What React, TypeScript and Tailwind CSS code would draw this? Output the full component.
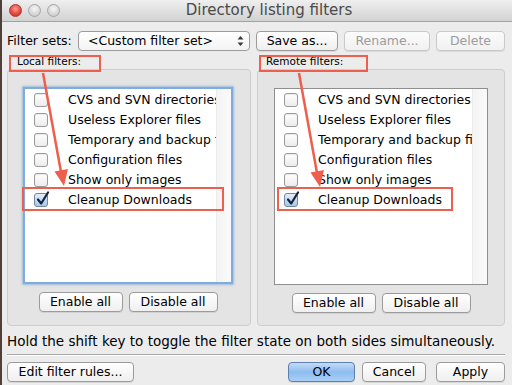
import React from 'react';

const FONT = "font-['DejaVu_Sans',sans-serif]";

const items = [
  { label: 'CVS and SVN directories', on: false },
  { label: 'Useless Explorer files', on: false },
  { label: 'Temporary and backup files', on: false },
  { label: 'Configuration files', on: false },
  { label: 'Show only images', on: false },
  { label: 'Cleanup Downloads', on: true },
];

function Check({ on }: { on: boolean }) {
  if (on) {
    return (
      <span className="relative block w-[14px] h-[14px] rounded-[3px] border border-[#6c86a6] bg-gradient-to-b from-[#e4eef9] to-[#a9c7e8] shrink-0">
        <svg className="absolute left-[1px] top-[-3px]" width="14" height="15" viewBox="0 0 14 15">
          <path d="M2 8.5 L5.2 12.5 L12 1.5" fill="none" stroke="#15233f" strokeWidth="2.2" strokeLinecap="round" strokeLinejoin="round" />
        </svg>
      </span>
    );
  }
  return (
    <span className="block w-[14px] h-[14px] rounded-[3px] border border-[#9a9a9a] bg-gradient-to-b from-white to-[#ececec] shadow-[inset_0_1px_1px_rgba(0,0,0,0.08)] shrink-0" />
  );
}

function MacButton({ children, w, disabled, primary }: { children: React.ReactNode; w: string; disabled?: boolean; primary?: boolean }) {
  let cls = 'border-[#9b9b9b] bg-gradient-to-b from-white to-[#efefef] text-black';
  if (disabled) cls = 'border-[#c9c9c9] bg-gradient-to-b from-[#fbfbfb] to-[#f1f1f1] text-[#9c9c9c]';
  if (primary) cls = 'border-[#5c7fae] bg-gradient-to-b from-[#c3dcf7] via-[#8dbcee] to-[#a9cff5] text-black';
  return (
    <div className={`${w} h-[20px] shrink-0 rounded-[4px] border ${cls} shadow-[0_1px_0_rgba(0,0,0,0.08)] flex items-center justify-center text-[12.5px] leading-none`}>
      {children}
    </div>
  );
}

function FilterList({ focused, listW, ml }: { focused: boolean; listW: string; ml: string }) {
  return (
    <div className={`${listW} ${ml}`}>
      <div
        className={`h-[197px] bg-white flex overflow-hidden ${
          focused
            ? 'border-2 border-[#80abdd] shadow-[0_0_2px_1px_rgba(110,160,220,0.6)]'
            : 'border border-[#8f8f8f]'
        }`}
      >
        <div className="flex-1 min-w-0 pt-[1px] overflow-hidden">
          {items.map((it) => (
            <div key={it.label} className="h-[20px] flex items-center pl-[9px]">
              <Check on={it.on} />
              <span className="ml-[20px] whitespace-nowrap text-[12.5px] text-black">{it.label}</span>
            </div>
          ))}
        </div>
        <div className="w-[15px] shrink-0 border-l border-[#ececec] bg-gradient-to-r from-[#f4f4f4] to-[#fafafa]" />
      </div>
    </div>
  );
}

export default function App() {
  return (
    <div className={`relative w-[512px] h-[385px] overflow-hidden bg-[#ececec] border-l-2 border-[#4f403a] ${FONT}`}>
      {/* title bar */}
      <div className="h-[22px] flex items-center border-b border-[#a3a3a3] bg-gradient-to-b from-[#efefef] to-[#d2d2d2]">
        <div className="flex gap-[6px] pl-[7px]">
          <span className="w-[13px] h-[13px] rounded-full border border-[#b3362f] bg-[radial-gradient(circle_at_50%_35%,#ff9b8f,#e0443b_60%,#c2322a)]" />
          <span className="w-[13px] h-[13px] rounded-full border border-[#a6a6a6] bg-[radial-gradient(circle_at_50%_35%,#f7f7f7,#d6d6d6_60%,#c4c4c4)]" />
          <span className="w-[13px] h-[13px] rounded-full border border-[#a6a6a6] bg-[radial-gradient(circle_at_50%_35%,#f7f7f7,#d6d6d6_60%,#c4c4c4)]" />
        </div>
        <div className="flex-1 text-center pr-[34px] text-[15px] text-[#4a4a4a] whitespace-nowrap">Directory listing filters</div>
      </div>

      <div className="pl-[5px] pr-[7px]">
        {/* filter set row */}
        <div className="mt-[9px] h-[20px] flex items-center">
          <span className="w-[71px] shrink-0 text-[12.5px] text-black whitespace-nowrap">Filter sets:</span>
          <div className="w-[172px] h-[20px] shrink-0 rounded-[4px] border border-[#9b9b9b] bg-gradient-to-b from-white to-[#f3f3f3] flex items-center pl-[9px] pr-[5px]">
            <span className="flex-1 text-[12.5px] text-black">&lt;Custom filter set&gt;</span>
            <svg width="7" height="12" viewBox="0 0 7 12">
              <path d="M3.5 1 L6.5 4.5 L0.5 4.5 Z" fill="#3b3b3b" />
              <path d="M3.5 11 L6.5 7.5 L0.5 7.5 Z" fill="#3b3b3b" />
            </svg>
          </div>
          <div className="flex gap-[6px] ml-[6px]">
            <MacButton w="w-[82px]">Save as...</MacButton>
            <MacButton w="w-[86px]" disabled>Rename...</MacButton>
            <MacButton w="w-[69px]" disabled>Delete</MacButton>
          </div>
        </div>

        {/* filter groups */}
        <div className="flex gap-[6px]">
          <div className="w-[244px]">
            <div className="h-[18px] pl-[10px] pt-[4px] text-[10.5px] leading-[12px] text-black">Local filters:</div>
            <div className="h-[257px] rounded-[4px] border border-[#cdcdcd] bg-[#e4e4e4] pt-[17px]">
              <FilterList focused listW="w-[210px]" ml="ml-[15px]" />
              <div className="mt-[8px] w-[210px] ml-[15px] flex justify-center gap-[6px]">
                <MacButton w="w-[84px]">Enable all</MacButton>
                <MacButton w="w-[89px]">Disable all</MacButton>
              </div>
            </div>
          </div>
          <div className="w-[248px]">
            <div className="h-[18px] pl-[9px] pt-[4px] text-[10.5px] leading-[12px] text-black">Remote filters:</div>
            <div className="h-[257px] rounded-[4px] border border-[#cdcdcd] bg-[#e4e4e4] pt-[18px]">
              <FilterList focused={false} listW="w-[214px]" ml="ml-[16px]" />
              <div className="mt-[8px] w-[214px] ml-[16px] flex justify-center gap-[6px]">
                <MacButton w="w-[84px]">Enable all</MacButton>
                <MacButton w="w-[89px]">Disable all</MacButton>
              </div>
            </div>
          </div>
        </div>

        <div className="mt-[6px] h-[18px] text-[13.5px] leading-[18px] text-black whitespace-nowrap">
          Hold the shift key to toggle the filter state on both sides simultaneously.
        </div>
        <div className="mt-[4px] h-[1px] bg-[#a8a8a8] border-b border-white box-content" />

        <div className="mt-[6px] flex items-center">
          <MacButton w="w-[127px]">Edit filter rules...</MacButton>
          <div className="flex-1" />
          <MacButton w="w-[67px]" primary>OK</MacButton>
          <div className="w-[7px]" />
          <MacButton w="w-[64px]">Cancel</MacButton>
          <div className="w-[10px]" />
          <MacButton w="w-[69px]">Apply</MacButton>
        </div>
      </div>

      {/* annotations */}
      <div className="absolute left-[7px] top-[55px] w-[92px] h-[17px] border-2 border-[#ee5f4d]" />
      <div className="absolute left-[257px] top-[55px] w-[109px] h-[17px] border-2 border-[#ee5f4d]" />
      <div className="absolute left-[20px] top-[187px] w-[202px] h-[24px] border-2 border-[#ee5f4d]" />
      <div className="absolute left-[275px] top-[187px] w-[176px] h-[24px] border-2 border-[#ee5f4d]" />
      <svg className="absolute left-[-2px] top-0 pointer-events-none" width="512" height="385" viewBox="0 0 512 385">
        <line x1="43" y1="73" x2="61" y2="172" stroke="#ee5f4d" strokeWidth="2.5" />
        <polygon points="64,186 68,169 54.5,171.5" fill="#ee5f4d" />
        <line x1="299" y1="73" x2="317" y2="173" stroke="#ee5f4d" strokeWidth="2.5" />
        <polygon points="320,187 324,170 310.5,172.5" fill="#ee5f4d" />
      </svg>
    </div>
  );
}
